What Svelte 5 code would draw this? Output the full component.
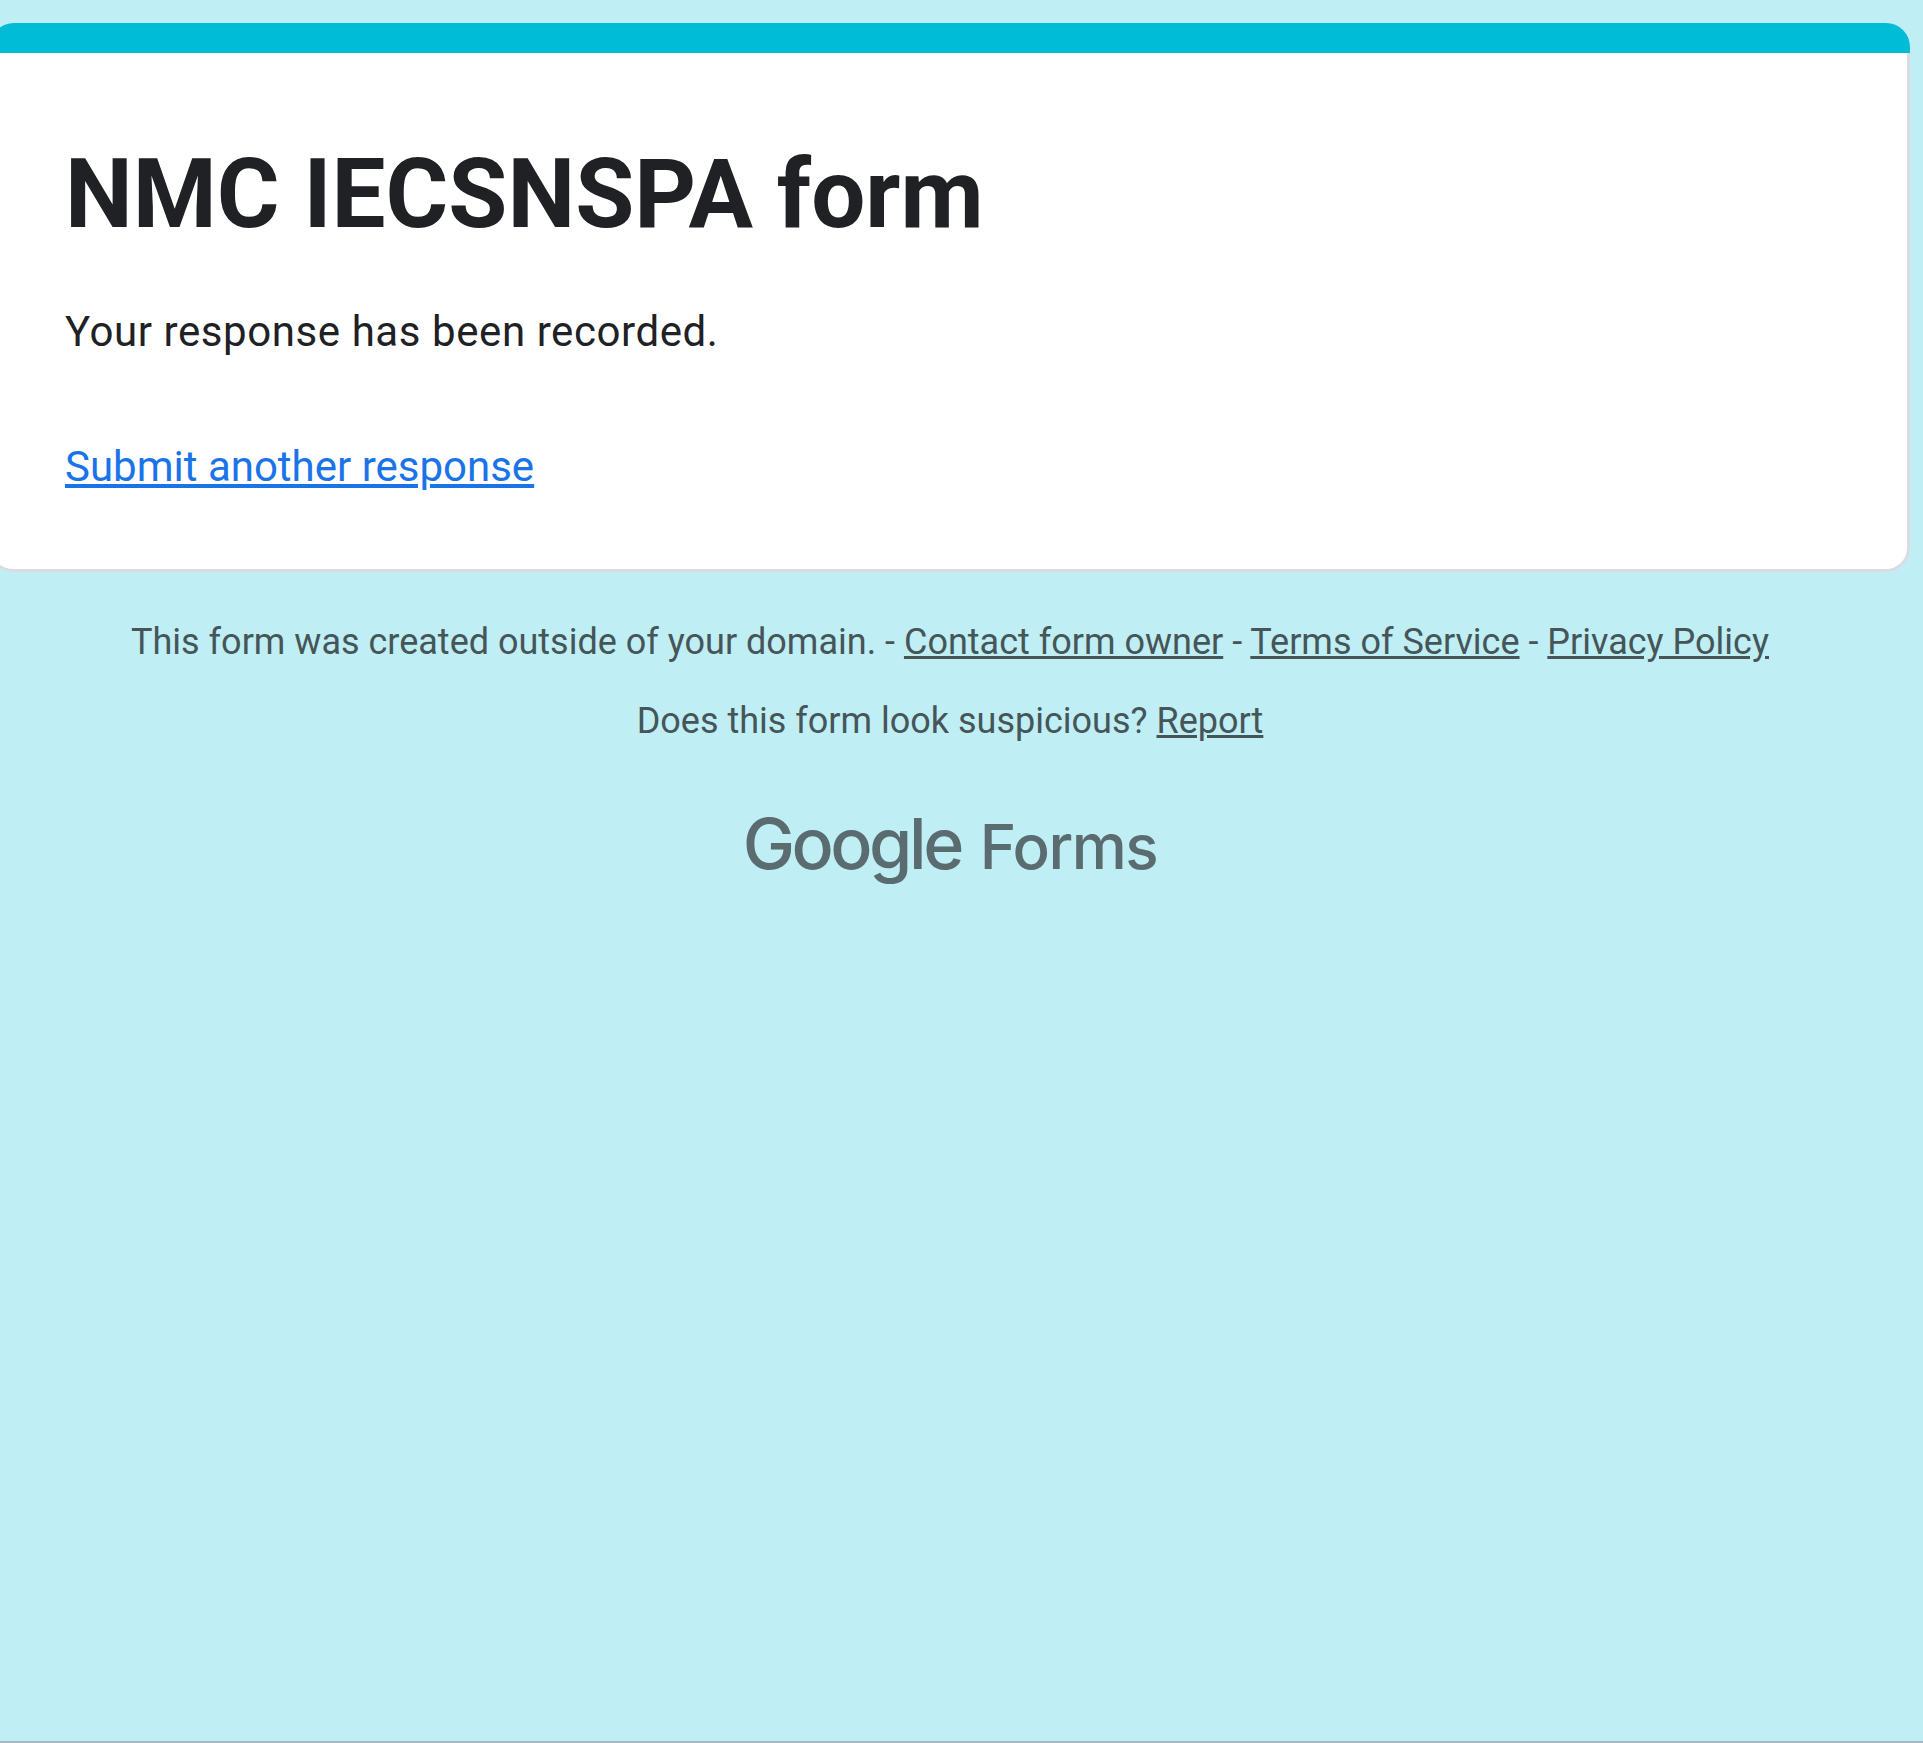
<script lang="ts">
	const title = 'NMC IECSNSPA form';
</script>

<div class="page">
	<main class="container">
		<section class="card">
			<div class="card__bar"></div>
			<div class="card__body">
				<h1 class="card__title">{title}</h1>
				<p class="card__message">Your response has been recorded.</p>
				<a class="card__link" href="#another">Submit another response</a>
			</div>
		</section>

		<footer class="footer">
			<p class="footer__line">
				This form was created outside of your domain. - <a href="#owner">Contact form owner</a> -
				<a href="#terms">Terms of Service</a> - <a href="#privacy">Privacy Policy</a>
			</p>
			<p class="footer__line footer__line--second">
				Does this form look suspicious? <a href="#report">Report</a>
			</p>
			<div class="logo">
				<span class="logo__google">Google</span>
				<span class="logo__forms">Forms</span>
			</div>
		</footer>
	</main>
</div>

<style>
	:global(body) {
		margin: 0;
		background-color: #bfeef4;
		overflow: hidden;
	}

	.page {
		box-sizing: border-box;
		height: 1743px;
		padding-top: 23px;
		border-bottom: 2px solid #a9b7c5;
		font-family: Roboto, sans-serif;
	}

	.container {
		width: 1920px;
		margin-left: -10px;
	}

	.card__bar {
		height: 30px;
		border-radius: 24px 24px 0 0;
		background-color: #00bcd6;
	}

	.card__body {
		box-sizing: border-box;
		height: 519px;
		padding: 81px 0 0 75px;
		border-right: 3px solid #dadce0;
		border-bottom: 3px solid #dadce0;
		border-radius: 0 0 24px 24px;
		background-color: #fff;
	}

	.card__title {
		margin: 0;
		color: #202124;
		font-size: 96px;
		font-weight: 700;
		line-height: 120px;
	}

	.card__message {
		margin: 50px 0 0;
		color: #202124;
		font-size: 42px;
		letter-spacing: 0.58px;
		line-height: 56px;
	}

	.card__link {
		display: inline-block;
		margin-top: 79px;
		color: #1a73e8;
		font-size: 42px;
		line-height: 56px;
	}

	.footer {
		color: #455558;
		font-size: 36px;
		line-height: 48px;
		text-align: center;
	}

	.footer a {
		color: inherit;
	}

	.footer__line {
		margin: 46px 0 0;
	}

	.footer__line--second {
		margin-top: 31px;
	}

	.logo {
		display: flex;
		gap: 19px;
		align-items: baseline;
		justify-content: center;
		margin-top: 59px;
		color: #5a6c70;
		font-family: Inter, sans-serif;
		font-weight: 500;
		line-height: 80px;
	}

	.logo__google {
		font-size: 70px;
		letter-spacing: -3.5px;
	}

	.logo__forms {
		font-size: 62px;
		letter-spacing: -1.5px;
	}
</style>
